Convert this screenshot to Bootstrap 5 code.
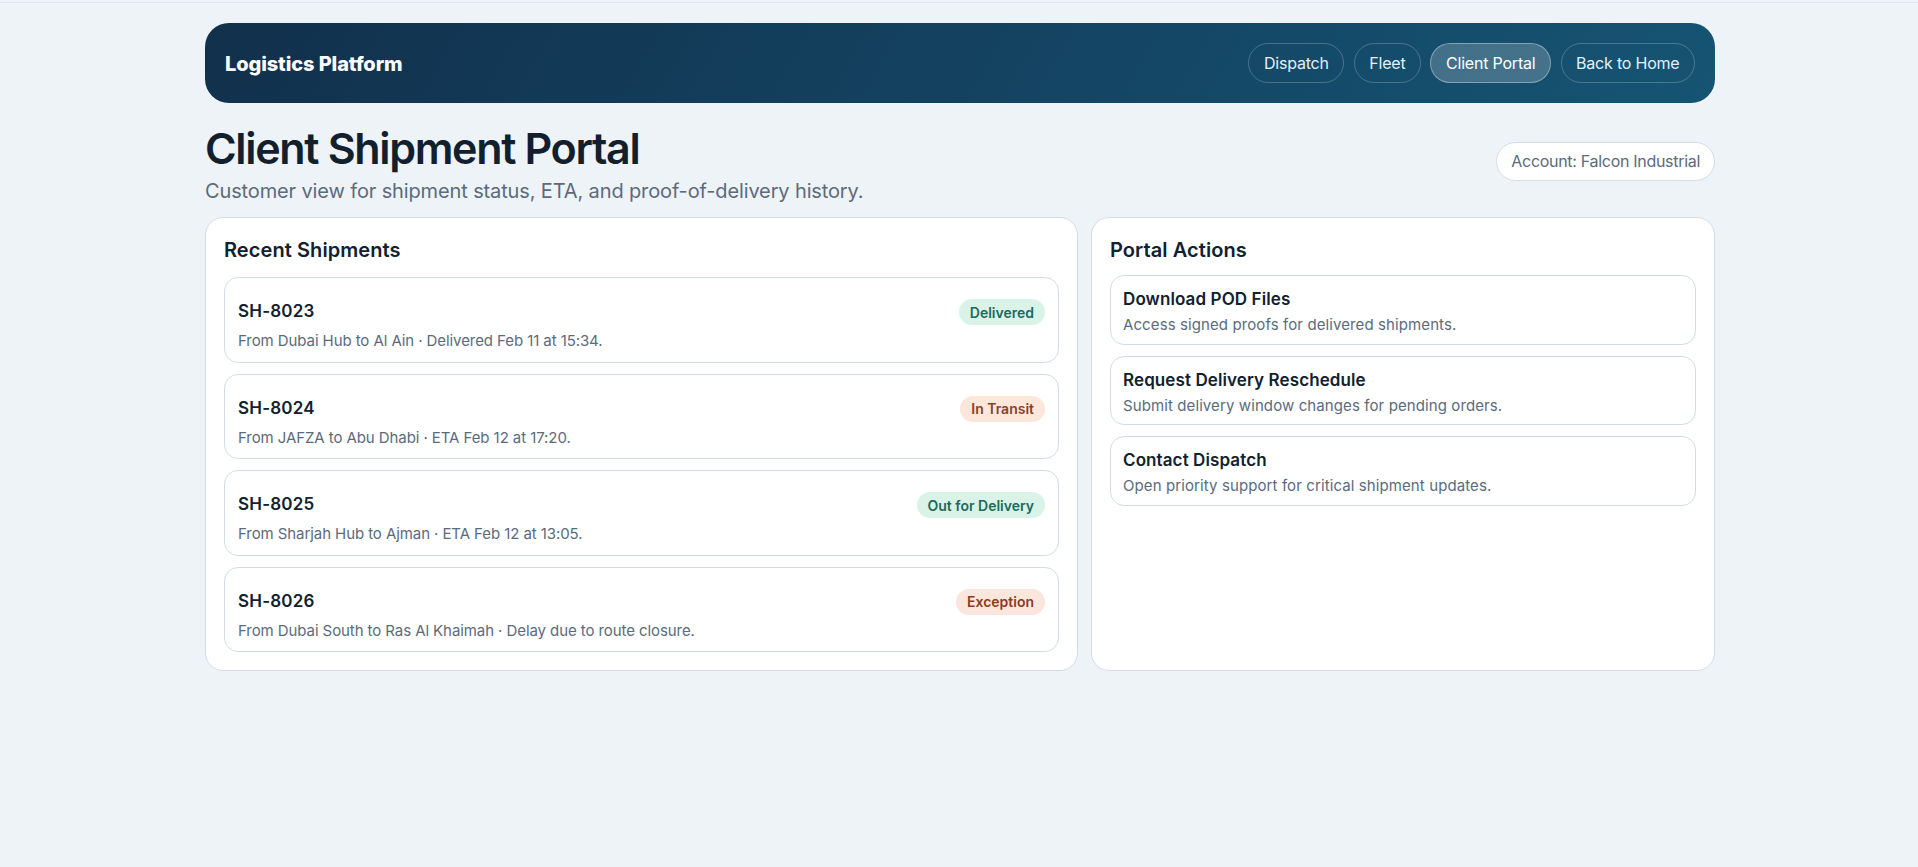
<!DOCTYPE html>
<html lang="en">
<head>
  <meta charset="UTF-8" />
  <meta name="viewport" content="width=device-width, initial-scale=1.0"/>
  <title>Client Shipment Portal</title>
  <link href="https://cdn.jsdelivr.net/npm/bootstrap@5.3.3/dist/css/bootstrap.min.css" rel="stylesheet" />
  <style>
    body {
      background-color: #eef3f8;
      font-family: "Inter", "Liberation Sans", sans-serif;
      color: #10212f;
    }
    .top-line {
      height: 2px;
      background: #eef3f8;
      border-bottom: 1px solid #dde4ec;
      box-sizing: content-box;
    }
    .page-wrap {
      width: 1510px;
      margin-left: 205px;
      padding-top: 20px;
    }
    .app-bar {
      height: 80px;
      padding: 0 20px;
      border-radius: 24px;
      background: linear-gradient(120deg, #11304c, #165474);
    }
    .app-brand {
      color: #fff;
      font-size: 20px;
      font-weight: 800;
      letter-spacing: -0.1px;
      margin-top: 2px;
    }
    .bar-nav {
      gap: 9.5px;
    }
    .bar-link {
      height: 40px;
      padding: 0 14.5px;
      display: flex;
      align-items: center;
      color: #e2f1fb;
      font-size: 16px;
      letter-spacing: -0.2px;
      text-decoration: none;
      border: 1px solid rgba(255,255,255,.22);
      border-radius: 20px;
    }
    .bar-link.is-active {
      background: rgba(255,255,255,.2);
      color: #fff;
      border-color: rgba(255,255,255,.35);
    }
    .title-row {
      margin-top: 18.5px;
      margin-bottom: 12px;
    }
    .page-title {
      font-size: 43px;
      font-weight: 600;
      letter-spacing: -1.33px;
      line-height: 52px;
      color: #12202e;
      margin: 0 0 3.5px;
    }
    .page-sub {
      font-size: 20px;
      color: #5b6b7c;
      letter-spacing: -0.13px;
      line-height: 28px;
      margin: 0;
    }
    .account-chip {
      height: 39px;
      padding: 0 14px;
      margin-bottom: 4px;
      display: flex;
      align-items: center;
      background: #fff;
      border: 1px solid #d3dce6;
      border-radius: 20px;
      color: #5b6b7c;
      font-size: 16px;
      letter-spacing: -0.3px;
    }
    .panels {
      gap: 13px;
    }
    .panel-box {
      background: #fff;
      border: 1px solid #d3dce6;
      border-radius: 18px;
      padding: 18px;
    }
    .panel-side {
      width: 624px;
    }
    .panel-title {
      font-size: 20px;
      font-weight: 600;
      letter-spacing: 0.08px;
      line-height: 28px;
      margin: 0 0 13px;
      color: #10212f;
    }
    .panel-side .panel-title {
      margin-bottom: 11px;
    }
    .stack-list {
      gap: 11px;
    }
    .ship-row {
      height: 85.55px;
      padding: 21px 13px 0 13px;
      border: 1px solid #d3dce6;
      border-radius: 14px;
    }
    .ship-head {
      margin-bottom: 5px;
    }
    .ship-id {
      font-size: 17px;
      font-weight: 600;
      letter-spacing: 0.2px;
      color: #10212f;
    }
    .ship-meta {
      font-size: 15px;
      color: #5b6b7c;
      letter-spacing: -0.08px;
      line-height: 22px;
    }
    .status-pill {
      font-size: 14px;
      font-weight: 600;
      padding: 0 11px;
      height: 26px;
      display: flex;
      align-items: center;
      border-radius: 13px;
    }
    .status-ok { background: #daf3e9; color: #1c6a58; }
    .status-warn { background: #fde6da; color: #8a4326; }
    .status-bad { background: #fae6dc; color: #8a3d20; }
    .action-row {
      height: 69.5px;
      padding: 11px 12px 0;
      border: 1px solid #d3dce6;
      border-radius: 14px;
    }
    .action-name {
      font-size: 17px;
      font-weight: 600;
      letter-spacing: 0.1px;
      line-height: 24px;
      color: #10212f;
    }
    .action-text {
      font-size: 15px;
      color: #5b6b7c;
      letter-spacing: 0.1px;
      line-height: 22px;
      margin-top: 3px;
    }
  </style>
</head>
<body>
  <div class="top-line"></div>
  <div class="page-wrap">
    <header class="app-bar d-flex justify-content-between align-items-center">
      <div class="app-brand">Logistics Platform</div>
      <nav class="bar-nav d-flex">
        <a class="bar-link" href="#">Dispatch</a>
        <a class="bar-link" href="#">Fleet</a>
        <a class="bar-link is-active" href="#">Client Portal</a>
        <a class="bar-link" href="#">Back to Home</a>
      </nav>
    </header>

    <div class="title-row d-flex justify-content-between align-items-center">
      <div>
        <h1 class="page-title">Client Shipment Portal</h1>
        <p class="page-sub">Customer view for shipment status, ETA, and proof-of-delivery history.</p>
      </div>
      <div class="account-chip">Account: Falcon Industrial</div>
    </div>

    <div class="panels d-flex align-items-stretch">
      <section class="panel-box flex-grow-1">
        <h2 class="panel-title">Recent Shipments</h2>
        <div class="stack-list d-flex flex-column" id="shipList"></div>
      </section>
      <section class="panel-box panel-side flex-shrink-0">
        <h2 class="panel-title">Portal Actions</h2>
        <div class="stack-list d-flex flex-column" id="actionList"></div>
      </section>
    </div>
  </div>

  <script src="https://cdn.jsdelivr.net/npm/bootstrap@5.3.3/dist/js/bootstrap.bundle.min.js"></script>
  <script>
    const shipments = [
      ["SH-8023", "Delivered", "status-ok", "From Dubai Hub to Al Ain · Delivered Feb 11 at 15:34."],
      ["SH-8024", "In Transit", "status-warn", "From JAFZA to Abu Dhabi · ETA Feb 12 at 17:20."],
      ["SH-8025", "Out for Delivery", "status-ok", "From Sharjah Hub to Ajman · ETA Feb 12 at 13:05."],
      ["SH-8026", "Exception", "status-bad", "From Dubai South to Ras Al Khaimah · Delay due to route closure."]
    ];
    const actions = [
      ["Download POD Files", "Access signed proofs for delivered shipments."],
      ["Request Delivery Reschedule", "Submit delivery window changes for pending orders."],
      ["Contact Dispatch", "Open priority support for critical shipment updates."]
    ];
    document.getElementById("shipList").innerHTML = shipments.map(s => `
      <div class="ship-row">
        <div class="ship-head d-flex justify-content-between align-items-center">
          <span class="ship-id">${s[0]}</span>
          <span class="status-pill ${s[2]}">${s[1]}</span>
        </div>
        <div class="ship-meta">${s[3]}</div>
      </div>`).join("");
    document.getElementById("actionList").innerHTML = actions.map(a => `
      <div class="action-row">
        <div class="action-name">${a[0]}</div>
        <div class="action-text">${a[1]}</div>
      </div>`).join("");
  </script>
</body>
</html>
